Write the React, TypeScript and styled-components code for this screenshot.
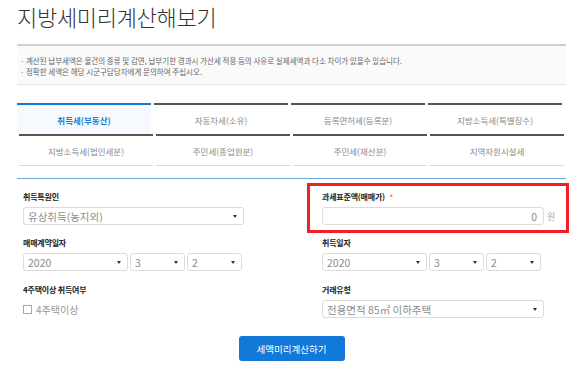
import styled, { createGlobalStyle } from "styled-components";

const GlobalStyle = createGlobalStyle`
  html, body {
    margin: 0;
    padding: 0;
    background: #fff;
  }
  body {
    font-family: "Noto Sans CJK KR", "Noto Sans", sans-serif;
    color: #333;
  }
`;

const tabsTop = [
  "취득세(부동산)",
  "자동차세(소유)",
  "등록면허세(등록분)",
  "지방소득세(특별징수)",
];
const tabsBottom = [
  "지방소득세(법인세분)",
  "주민세(종업원분)",
  "주민세(재산분)",
  "지역자원시설세",
];

const App = () => {
  return (
    <>
      <GlobalStyle />
      <Page>
        <Title>지방세미리계산해보기</Title>
        <Notice>
          <p>· 계산된 납부세액은 물건의 종류 및 감면, 납부기한 경과시 가산세 적용 등의 사유로 실제세액과 다소 차이가 있을수 있습니다.</p>
          <p>· 정확한 세액은 해당 시군구담당자에게 문의하여 주십시오.</p>
        </Notice>

        <Tabs>
          <TabRow>
            {tabsTop.map((t, i) => (
              <Tab key={t} $active={i === 0}>
                {t}
              </Tab>
            ))}
          </TabRow>
          <TabRow $shift>
            {tabsBottom.map((t) => (
              <Tab key={t} $lower>
                {t}
              </Tab>
            ))}
          </TabRow>
        </Tabs>

        <Form>
          <Field>
            <Label>취득특원인</Label>
            <Select $w={221}>
              <span>유상취득(농지외)</span>
              <Caret />
            </Select>
          </Field>
          <Field $marked>
            <Label>
              과세표준액(매매가) <Req>*</Req>
            </Label>
            <AmountRow>
              <Amount>0</Amount>
              <Unit>원</Unit>
            </AmountRow>
          </Field>

          <Field>
            <Label>매매계약일자</Label>
            <DateRow>
              <Select $w={105}>
                <span>2020</span>
                <Caret />
              </Select>
              <Select $w={55}>
                <span>3</span>
                <Caret />
              </Select>
              <Select $w={55}>
                <span>2</span>
                <Caret />
              </Select>
            </DateRow>
          </Field>
          <Field>
            <Label>취득일자</Label>
            <DateRow>
              <Select $w={105}>
                <span>2020</span>
                <Caret />
              </Select>
              <Select $w={55}>
                <span>3</span>
                <Caret />
              </Select>
              <Select $w={55}>
                <span>2</span>
                <Caret />
              </Select>
            </DateRow>
          </Field>

          <Field>
            <Label>4주택이상 취득여부</Label>
            <CheckRow>
              <CheckBox />
              <span>4주택이상</span>
            </CheckRow>
          </Field>
          <Field>
            <Label>거래유형</Label>
            <Select $w={222}>
              <span>전용면적 85㎡ 이하주택</span>
              <Caret />
            </Select>
          </Field>
        </Form>

        <ButtonWrap>
          <SubmitButton>세액미리계산하기</SubmitButton>
        </ButtonWrap>
      </Page>
    </>
  );
};

export default App;

const Page = styled.div`
  width: 549px;
  padding: 0 0 0 17px;
`;

const Title = styled.h1`
  margin: 0;
  font-size: 22px;
  font-weight: 300;
  line-height: 33px;
  color: #333;
  letter-spacing: -0.3px;
`;

const Notice = styled.div`
  margin-top: 11px;
  border-top: 2px solid #cfcfcf;
  border-bottom: 1px solid #e2e2e2;
  background: #fafafa;
  padding: 9px 0 7px 3px;

  p {
    margin: 0;
    font-size: 7.5px;
    line-height: 11px;
    color: #666;
    white-space: nowrap;
  }
`;

const Tabs = styled.div`
  margin-top: 18px;
  border-bottom: 1px solid #6fa7dc;
  padding-bottom: 12px;
`;

const TabRow = styled.div<{ $shift?: boolean }>`
  display: grid;
  grid-template-columns: repeat(4, 134px);
  column-gap: 3px;
  padding-left: ${(p) => (p.$shift ? "2px" : "0")};
`;

const Tab = styled.div<{ $active?: boolean; $lower?: boolean }>`
  height: 29px;
  border-top: 2px solid ${(p) => (p.$active ? "#1479d4" : "#555")};
  border-bottom: ${(p) => (p.$lower ? "1px solid #dcdcdc" : "none")};
  background: ${(p) => (p.$active ? "#f6faff" : "#fff")};
  display: flex;
  align-items: center;
  justify-content: center;
  font-size: 8.5px;
  font-weight: ${(p) => (p.$active ? 700 : 400)};
  color: ${(p) => (p.$active ? "#1d7dd2" : "#888")};
`;

const Form = styled.div`
  display: grid;
  grid-template-columns: 299px 1fr;
  row-gap: 12px;
  padding: 12px 0 0 6px;

  & > :nth-child(n + 5) {
    margin-top: 1px;
  }
`;

const Field = styled.div<{ $marked?: boolean }>`
  position: relative;
  display: flex;
  flex-direction: column;

  ${(p) =>
    p.$marked &&
    `
    &::after {
      content: "";
      position: absolute;
      left: -15px;
      top: -8px;
      width: 256px;
      height: 44px;
      border: 3px solid #ee2127;
      pointer-events: none;
    }
  `}
`;

const Label = styled.div`
  font-size: 8px;
  font-weight: 700;
  line-height: 12px;
  color: #222;
  margin-bottom: 4px;
  letter-spacing: -0.2px;
`;

const Req = styled.span`
  color: #e8333a;
  font-weight: 400;
  margin-left: 3px;
  position: relative;
  top: 1px;
`;

const Select = styled.div<{ $w: number }>`
  box-sizing: border-box;
  width: ${(p) => p.$w}px;
  height: 18px;
  border: 1px solid #dcdcdc;
  border-radius: 3px;
  display: flex;
  align-items: center;
  justify-content: space-between;
  padding: 0 6px 0 4px;
  font-size: 10.5px;
  color: #8c8c8c;
  background: #fff;
`;

const Caret = styled.i`
  display: block;
  width: 0;
  height: 0;
  border-left: 2px solid transparent;
  border-right: 2px solid transparent;
  border-top: 3px solid #333;
`;

const DateRow = styled.div`
  display: flex;
  gap: 2px;
`;

const AmountRow = styled.div`
  display: flex;
  align-items: center;
  gap: 3px;
`;

const Amount = styled.div`
  box-sizing: border-box;
  width: 222px;
  height: 18px;
  border: 1px solid #dcdcdc;
  border-radius: 3px;
  display: flex;
  align-items: center;
  justify-content: flex-end;
  padding-right: 6px;
  font-size: 10.5px;
  color: #8c8c8c;
`;

const Unit = styled.span`
  font-size: 9px;
  color: #aaa;
`;

const CheckRow = styled.div`
  display: flex;
  align-items: center;
  gap: 4px;
  height: 18px;
  font-size: 10px;
  color: #999;
`;

const CheckBox = styled.span`
  box-sizing: border-box;
  width: 9px;
  height: 9px;
  border: 1px solid #aaa;
  background: #fff;
`;

const ButtonWrap = styled.div`
  display: flex;
  justify-content: center;
  padding-top: 18px;
`;

const SubmitButton = styled.button`
  width: 106px;
  height: 25px;
  border: none;
  border-radius: 3px;
  background: #1279d9;
  color: #fff;
  font-family: "Noto Sans CJK KR", "Noto Sans", sans-serif;
  font-size: 9.5px;
  cursor: pointer;
`;
